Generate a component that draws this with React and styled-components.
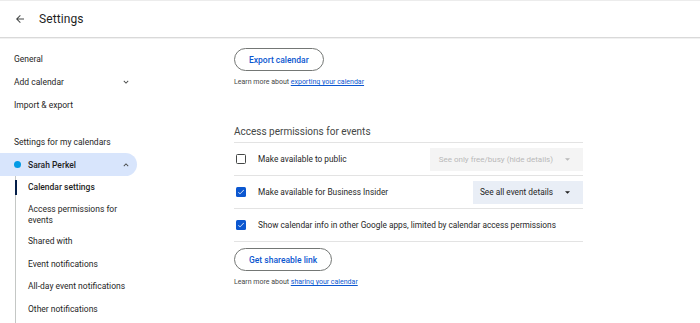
import styled, { createGlobalStyle } from 'styled-components';

const GlobalStyle = createGlobalStyle`
    html, body {
        margin: 0;
        padding: 0;
        background: #ffffff;
        font-family: Roboto, "Liberation Sans", Arial, sans-serif;
        color: #1f1f1f;
    }
`;

const BLUE = '#0b57d0';

function BackArrow() {
    return (
        <svg width="12" height="12" viewBox="0 0 24 24">
            <path fill="#444746" d="M20 11H7.83l5.59-5.59L12 4l-8 8 8 8 1.41-1.41L7.83 13H20v-2z" />
        </svg>
    );
}

function Chevron({ up }) {
    return (
        <svg width="10" height="10" viewBox="0 0 24 24" style={up ? { transform: 'rotate(180deg)' } : undefined}>
            <path fill="#444746" d="M16.59 8.59 12 13.17 7.41 8.59 6 10l6 6 6-6z" />
        </svg>
    );
}

function Check() {
    return (
        <svg width="8" height="8" viewBox="0 0 24 24">
            <path fill="#ffffff" d="M9 16.17 4.83 12l-1.42 1.41L9 19 21 7l-1.41-1.41z" />
        </svg>
    );
}

function Caret() {
    return (
        <svg width="5" height="3" viewBox="0 0 10 5">
            <path fill="currentColor" d="M0 0l5 5 5-5z" />
        </svg>
    );
}

const subItems = [
    { label: 'Calendar settings', active: true },
    { label: 'Access permissions for events', wrap: true },
    { label: 'Shared with' },
    { label: 'Event notifications' },
    { label: 'All-day event notifications' },
    { label: 'Other notifications' },
];

const permissions = [
    { label: 'Make available to public', checked: false, select: 'See only free/busy (hide details)', disabled: true, width: 153 },
    { label: 'Make available for Business Insider', checked: true, select: 'See all event details', width: 110 },
    { label: 'Show calendar info in other Google apps, limited by calendar access permissions', checked: true },
];

export default function App() {
    return (
        <Page>
            <GlobalStyle />
            <Header>
                <BackButton><BackArrow /></BackButton>
                <Title>Settings</Title>
            </Header>
            <Body>
                <Sidebar>
                    <NavItem>General</NavItem>
                    <NavItem>
                        Add calendar
                        <Chevron />
                    </NavItem>
                    <NavItem>Import &amp; export</NavItem>
                    <SectionLabel>Settings for my calendars</SectionLabel>
                    <CalendarPill>
                        <Dot />
                        <PillName>Sarah Perkel</PillName>
                        <Chevron up />
                    </CalendarPill>
                    <SubList>
                        {subItems.map((item) => (
                            <SubItem key={item.label} $active={item.active} $wrap={item.wrap}>
                                {item.label}
                            </SubItem>
                        ))}
                    </SubList>
                </Sidebar>
                <Main>
                    <OutlineButton>Export calendar</OutlineButton>
                    <Hint>
                        Learn more about <a href="#">exporting your calendar</a>
                    </Hint>
                    <SectionTitle>Access permissions for events</SectionTitle>
                    <Rows>
                        {permissions.map((p) => (
                            <Row key={p.label}>
                                <Box $checked={p.checked}>{p.checked && <Check />}</Box>
                                <RowLabel>{p.label}</RowLabel>
                                {p.select && (
                                    <Select $disabled={p.disabled} style={{ width: p.width }}>
                                        <span>{p.select}</span>
                                        <Caret />
                                    </Select>
                                )}
                            </Row>
                        ))}
                    </Rows>
                    <OutlineButton $top={6}>Get shareable link</OutlineButton>
                    <Hint>
                        Learn more about <a href="#">sharing your calendar</a>
                    </Hint>
                </Main>
            </Body>
        </Page>
    );
}

const Page = styled.div`
    width: 700px;
    height: 323px;
    overflow: hidden;
    display: flex;
    flex-direction: column;
`;

const Header = styled.header`
    height: 36px;
    flex-shrink: 0;
    display: flex;
    align-items: center;
    border-top: 1px solid #ececec;
    border-bottom: 1px solid #d9d9d9;
    box-shadow: 0 1px 0 #f1f1f1;
`;

const BackButton = styled.div`
    width: 12px;
    height: 12px;
    margin-left: 14px;
    display: flex;
`;

const Title = styled.h1`
    margin: 0 0 0 13px;
    font-size: 12px;
    font-weight: 400;
    color: #1f1f1f;
    letter-spacing: 0.1px;
`;

const Body = styled.div`
    flex: 1;
    display: flex;
    min-height: 0;
`;

const Sidebar = styled.nav`
    width: 234px;
    flex-shrink: 0;
    padding-top: 9px;
    display: flex;
    flex-direction: column;
`;

const NavItem = styled.div`
    width: 117px;
    height: 23px;
    padding-left: 14px;
    display: flex;
    align-items: center;
    justify-content: space-between;
    font-size: 8.5px;
    color: #1f1f1f;
`;

const SectionLabel = styled.div`
    height: 23px;
    margin-top: 14px;
    padding-left: 14px;
    display: flex;
    align-items: center;
    font-size: 8.5px;
    font-weight: 400;
    color: #1f1f1f;
`;

const CalendarPill = styled.div`
    width: 117px;
    height: 23px;
    padding: 0 6px 0 14px;
    display: flex;
    align-items: center;
    background: #d8e5fc;
    border-radius: 0 12px 12px 0;
`;

const Dot = styled.span`
    width: 7px;
    height: 7px;
    border-radius: 50%;
    background: #039be5;
    margin-right: 7px;
`;

const PillName = styled.span`
    flex: 1;
    font-size: 8.5px;
    font-weight: 500;
    color: #1f1f1f;
`;

const SubList = styled.div`
    margin-left: 15px;
    border-left: 1px solid #c4c7c5;
    display: flex;
    flex-direction: column;
    flex: 1;
`;

const SubItem = styled.div`
    position: relative;
    padding: ${(p) => (p.$wrap ? '5px 0 5px 12px' : '5.75px 0 5.75px 12px')};
    line-height: 11px;
    font-size: 8.5px;
    color: #1f1f1f;
    font-weight: ${(p) => (p.$active ? 500 : 400)};
    width: ${(p) => (p.$wrap ? '92px' : '110px')};

    &::before {
        content: '';
        position: absolute;
        left: -1px;
        top: 4px;
        bottom: 4px;
        width: 2px;
        background: ${(p) => (p.$active ? '#041e49' : 'transparent')};
    }
`;

const Main = styled.main`
    width: 349px;
    padding-top: 10px;
    display: flex;
    flex-direction: column;
    align-items: flex-start;
`;

const OutlineButton = styled.button`
    height: 23px;
    margin-top: ${(p) => p.$top || 0}px;
    padding: 0 14px;
    border: 1px solid #747775;
    border-radius: 12px;
    background: #ffffff;
    color: ${BLUE};
    font-family: inherit;
    font-size: 8.5px;
    font-weight: 500;
    cursor: pointer;
`;

const Hint = styled.p`
    margin: 7px 0 0;
    font-size: 7px;
    color: #444746;

    a {
        color: ${BLUE};
        text-decoration: underline;
    }
`;

const SectionTitle = styled.h2`
    margin: 40px 0 0;
    height: 16px;
    font-size: 10px;
    font-weight: 400;
    color: #444746;
`;

const Rows = styled.div`
    width: 100%;
    display: flex;
    flex-direction: column;
    border-top: 1px solid #e3e3e3;
`;

const Row = styled.div`
    height: 32px;
    display: flex;
    align-items: center;
    border-bottom: 1px solid #e3e3e3;
`;

const Box = styled.span`
    width: 10px;
    height: 10px;
    margin-left: 2px;
    flex-shrink: 0;
    box-sizing: border-box;
    border-radius: 1.5px;
    border: ${(p) => (p.$checked ? 'none' : '1.3px solid #444746')};
    background: ${(p) => (p.$checked ? BLUE : '#ffffff')};
    display: flex;
    align-items: center;
    justify-content: center;
`;

const RowLabel = styled.span`
    flex: 1;
    margin-left: 12px;
    font-size: 8.3px;
    color: #1f1f1f;
    white-space: nowrap;
`;

const Select = styled.div`
    height: 23px;
    flex-shrink: 0;
    box-sizing: border-box;
    padding: 0 13px 0 4px;
    display: flex;
    align-items: center;
    justify-content: flex-end;
    white-space: nowrap;
    background: ${(p) => (p.$disabled ? '#f4f4f4' : '#e9eef6')};
    color: ${(p) => (p.$disabled ? '#b9b9b9' : '#1f1f1f')};
    font-size: ${(p) => (p.$disabled ? '8px' : '8.3px')};

    span {
        margin-right: 12px;
    }
`;
